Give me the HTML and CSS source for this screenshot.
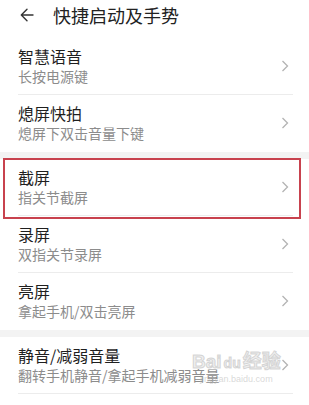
FILE: index.html
```html
<!DOCTYPE html>
<html lang="zh">
<head>
<meta charset="utf-8">
<link rel="stylesheet" href="styles.css">
</head>
<body>
<div class="screen">
  <header class="topbar">
    <svg class="back" width="14" height="14" viewBox="0 0 14 14"><path d="M13 7H1.5M7 1.3L1.3 7L7 12.7" fill="none" stroke="#333" stroke-width="1.4" stroke-linecap="round" stroke-linejoin="round"/></svg>
    <span class="title">快捷启动及手势</span>
  </header>
  <div class="group">
    <div class="item divided">
      <div class="texts"><div class="name">智慧语音</div><div class="desc">长按电源键</div></div>
      <svg class="chev" width="8" height="12" viewBox="0 0 8 12"><path d="M1.5 1L6.5 6L1.5 11" fill="none" stroke="#b3b3b3" stroke-width="1.3"/></svg>
    </div>
    <div class="item">
      <div class="texts"><div class="name">熄屏快拍</div><div class="desc">熄屏下双击音量下键</div></div>
      <svg class="chev" width="8" height="12" viewBox="0 0 8 12"><path d="M1.5 1L6.5 6L1.5 11" fill="none" stroke="#b3b3b3" stroke-width="1.3"/></svg>
    </div>
  </div>
  <div class="group">
    <div class="item divided highlighted">
      <div class="texts"><div class="name">截屏</div><div class="desc">指关节截屏</div></div>
      <svg class="chev" width="8" height="12" viewBox="0 0 8 12"><path d="M1.5 1L6.5 6L1.5 11" fill="none" stroke="#b3b3b3" stroke-width="1.3"/></svg>
    </div>
    <div class="item divided">
      <div class="texts"><div class="name">录屏</div><div class="desc">双指关节录屏</div></div>
      <svg class="chev" width="8" height="12" viewBox="0 0 8 12"><path d="M1.5 1L6.5 6L1.5 11" fill="none" stroke="#b3b3b3" stroke-width="1.3"/></svg>
    </div>
    <div class="item">
      <div class="texts"><div class="name">亮屏</div><div class="desc">拿起手机/双击亮屏</div></div>
      <svg class="chev" width="8" height="12" viewBox="0 0 8 12"><path d="M1.5 1L6.5 6L1.5 11" fill="none" stroke="#b3b3b3" stroke-width="1.3"/></svg>
    </div>
  </div>
  <div class="group">
    <div class="item divided">
      <div class="texts"><div class="name">静音/减弱音量</div><div class="desc">翻转手机静音/拿起手机减弱音量</div></div>
      <svg class="chev" width="8" height="12" viewBox="0 0 8 12"><path d="M1.5 1L6.5 6L1.5 11" fill="none" stroke="#b3b3b3" stroke-width="1.3"/></svg>
      <div class="watermark"><span class="wm-big">Bai<span class="wm-paw">du</span>经验</span><span class="wm-small">jingyan.baidu.com</span></div>
    </div>
    <div class="item">
      <div class="texts"><div class="name">快速通话</div><div class="desc">熄屏状态下长按音量下键</div></div>
      <svg class="chev" width="8" height="12" viewBox="0 0 8 12"><path d="M1.5 1L6.5 6L1.5 11" fill="none" stroke="#b3b3b3" stroke-width="1.3"/></svg>
    </div>
  </div>
</div>
</body>
</html>
```
FILE: styles.css
```css
* { box-sizing: border-box; }
html, body { margin: 0; padding: 0; background: #fff; }
body {
  width: 309px;
  height: 405px;
  overflow: hidden;
  font-family: "Noto Sans CJK SC", "Noto Sans", sans-serif;
}
.screen { display: flex; flex-direction: column; }
.topbar {
  height: 38px;
  display: flex;
  align-items: flex-start;
  padding: 0 0 0 20px;
}
.back { margin-top: 8px; }
.title {
  margin-left: 19px;
  font-size: 18px;
  line-height: 30px;
  color: #222;
}
.group { display: flex; flex-direction: column; }
.group + .group { border-top: 7px solid #f3f3f3; }
.item {
  position: relative;
  height: 57px;
  display: flex;
  align-items: center;
  padding: 0 20px 1px 18px;
}
.item.divided::before {
  content: "";
  position: absolute;
  left: 18px;
  right: 16px;
  bottom: 0;
  height: 1px;
  background: #ececec;
}
.texts { flex: 1; padding-top: 0; }
.name {
  font-size: 16px;
  line-height: 20px;
  color: #1f1f1f;
}
.desc {
  font-size: 14px;
  line-height: 19px;
  color: #8c8c8c;
  margin-top: 1px;
}
.chev { flex: none; }
.highlighted::after {
  content: "";
  position: absolute;
  left: 3px;
  right: 8px;
  top: -1px;
  height: 57px;
  border: 2px solid #c8424e;
}
.watermark {
  position: absolute;
  left: 192px;
  top: 14px;
  display: flex;
  flex-direction: column;
  align-items: center;
  color: rgba(200, 200, 200, 0.55);
  pointer-events: none;
}
.wm-big {
  font-family: "Liberation Sans", "Noto Sans CJK SC", sans-serif;
  font-size: 19px;
  line-height: 22px;
  font-weight: bold;
  color: rgba(235, 235, 235, 0.85);
  -webkit-text-stroke: 1px rgba(190, 190, 190, 0.6);
}
.wm-paw { font-size: 14px; margin: 0 2px; }
.wm-small {
  font-family: "Liberation Sans", sans-serif;
  font-size: 9px;
  line-height: 11px;
  color: rgba(190, 190, 190, 0.6);
}
```
